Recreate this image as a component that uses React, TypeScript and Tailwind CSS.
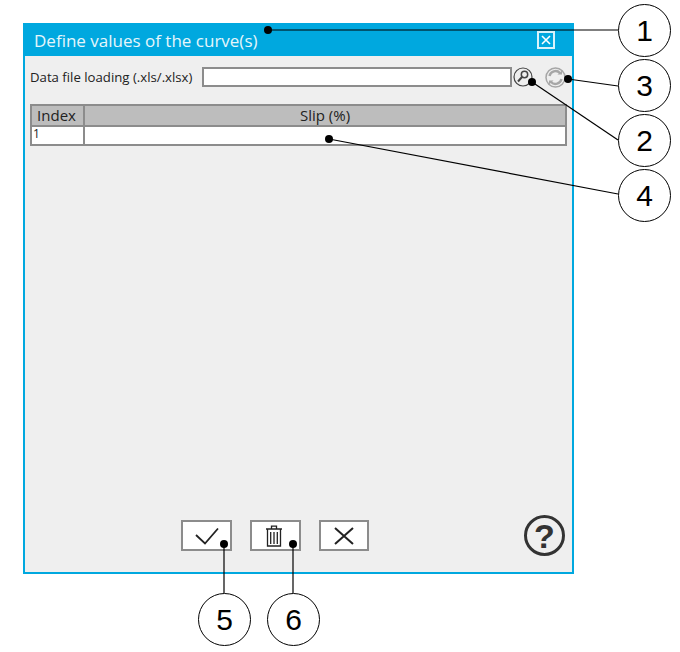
const callouts = [
  { n: 1, cls: "left-[618px] top-[4px]" },
  { n: 3, cls: "left-[618px] top-[59px]" },
  { n: 2, cls: "left-[618px] top-[114px]" },
  { n: 4, cls: "left-[618px] top-[169px]" },
  { n: 5, cls: "left-[198px] top-[593px]" },
  { n: 6, cls: "left-[267px] top-[593px]" },
];

const leaders = [
  { x1: 268, y1: 30, x2: 618, y2: 30 },
  { x1: 568, y1: 79, x2: 618, y2: 86 },
  { x1: 532, y1: 82, x2: 618, y2: 140 },
  { x1: 329, y1: 139, x2: 618, y2: 194 },
  { x1: 224, y1: 544, x2: 224, y2: 593 },
  { x1: 293, y1: 544, x2: 293, y2: 593 },
];

const App = () => {
  return (
    <div className="relative w-[680px] h-[652px] bg-white pl-[23px] pt-[23px] font-['Open_Sans',sans-serif] overflow-hidden">
      {/* dialog */}
      <div className="flex flex-col w-[551px] h-[551px] border-2 border-t-0 border-[#00a8df] bg-[#efefef]">
        <div className="flex items-center justify-between h-[33px] -mx-[2px] pl-[11px] pr-[19px] bg-[#00a8df] shrink-0">
          <span className="pt-[2px] text-[17px] text-[#e6f6fb] leading-none">Define values of the curve(s)</span>
          <div className="flex items-center justify-center w-[18px] h-[18px] border-2 border-[#d9f2fa]">
            <svg width="12" height="12" viewBox="0 0 12 12" stroke="#ffffff" strokeWidth="1.6">
              <path d="M2 2l8 8M10 2l-8 8" />
            </svg>
          </div>
        </div>

        <div className="flex flex-col flex-1 pl-[5px] pr-[5px]">
          {/* file row */}
          <div className="flex items-center h-[20px] mt-[11px]">
            <span className="w-[173px] pt-[2px] text-[13.2px] text-[#222222] whitespace-nowrap">Data file loading (.xls/.xlsx)</span>
            <div className="-ml-[1px] w-[310px] h-[20px] bg-white border-2 border-[#8c8c8c]" />
            <svg className="ml-[1px]" width="20" height="20" viewBox="0 0 20 20" fill="none" stroke="#444444">
              <circle cx="10" cy="10" r="9" strokeWidth="1.2" />
              <circle cx="11.5" cy="7.5" r="3.2" strokeWidth="1.5" />
              <path d="M9 10l-4 4.5" strokeWidth="2" />
            </svg>
            <svg className="ml-[12px]" width="21" height="21" viewBox="0 0 21 21" fill="none" stroke="#a6a6a6">
              <circle cx="10.5" cy="10.5" r="9.5" strokeWidth="1.5" />
              <path d="M4.5 9a6.2 6.2 0 0 1 10.5-3" strokeWidth="2.4" />
              <path d="M16.5 12a6.2 6.2 0 0 1-10.5 3" strokeWidth="2.4" />
              <path d="M12.5 7.5h4.5v-4z" fill="#a6a6a6" stroke="none" />
              <path d="M8.5 13.5h-4.5v4z" fill="#a6a6a6" stroke="none" />
            </svg>
          </div>

          {/* table */}
          <div className="flex flex-col w-[537px] h-[42px] mt-[17px] border-2 border-[#8c8c8c] text-[#222222]">
            <div className="flex h-[21px] bg-[#bdbdbd] border-b-2 border-[#8c8c8c] text-[15px] leading-[19px]">
              <div className="w-[53px] pr-[2px] text-center border-r-2 border-[#8c8c8c]">Index</div>
              <div className="flex-1 text-center">Slip (%)</div>
            </div>
            <div className="flex flex-1 bg-white text-[12px] leading-[14px]">
              <div className="w-[53px] pl-[1px] border-r-2 border-[#8c8c8c]">1</div>
              <div className="flex-1" />
            </div>
          </div>

          {/* footer */}
          <div className="relative flex gap-[18px] mt-auto mb-[21px] pl-[151px]">
            <button className="flex items-center justify-center w-[51px] h-[31px] bg-white border-2 border-[#8c8c8c]">
              <svg width="24" height="18" viewBox="0 0 24 18" fill="none" stroke="#222222" strokeWidth="1.8">
                <path d="M1 8l9 8.5L23 1.5" />
              </svg>
            </button>
            <button className="flex items-center justify-center w-[51px] h-[31px] pr-[3px] bg-white border-2 border-[#8c8c8c]">
              <svg width="16" height="22" viewBox="0 0 16 22" fill="none" stroke="#222222" strokeWidth="1.3">
                <path d="M0 4h16M5.5 4V1.2h5V4M1.5 4.5V21h13V4.5M4.7 7V19M8 7V19M11.3 7V19" />
              </svg>
            </button>
            <button className="flex items-center justify-center w-[50px] h-[31px] bg-white border-2 border-[#8c8c8c]">
              <svg width="20" height="18" viewBox="0 0 20 18" fill="none" stroke="#222222" strokeWidth="2">
                <path d="M1 1l18 16M19 1L1 17" />
              </svg>
            </button>
            <div className="absolute right-[2px] top-[-5px] flex items-center justify-center w-[41px] h-[41px] rounded-full border-[3px] border-[#333333] text-[34px] font-bold leading-none text-[#333333] font-['Liberation_Sans',sans-serif]">
              ?
            </div>
          </div>
        </div>
      </div>

      {/* callout leaders */}
      <svg className="absolute left-0 top-0" width="680" height="652" stroke="#000000" fill="#000000">
        {leaders.map((l) => (
          <g key={`${l.x1}-${l.y1}`}>
            <line x1={l.x1} y1={l.y1} x2={l.x2} y2={l.y2} strokeWidth="1.2" />
            <circle cx={l.x1} cy={l.y1} r="4" stroke="none" />
          </g>
        ))}
      </svg>
      {callouts.map((c) => (
        <div
          key={c.n}
          className={`absolute ${c.cls} flex items-center justify-center w-[53px] h-[53px] rounded-full border border-black bg-white text-[30px] leading-none text-black font-['Liberation_Sans',sans-serif]`}
        >
          {c.n}
        </div>
      ))}
    </div>
  );
};

export default App;
